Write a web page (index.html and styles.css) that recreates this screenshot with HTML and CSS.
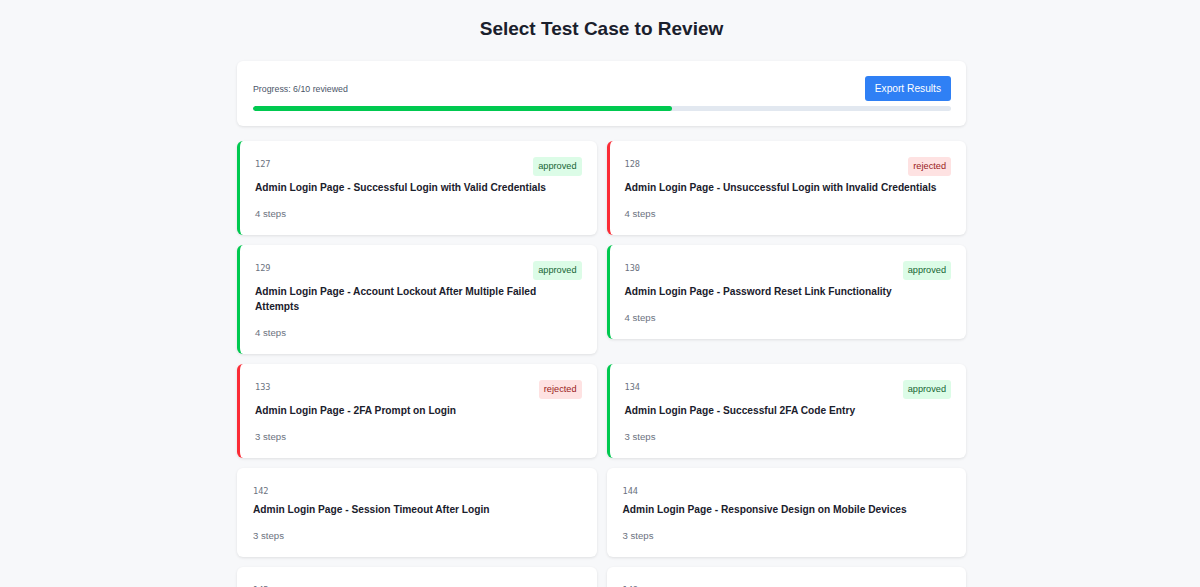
FILE: index.html
```html
<!DOCTYPE html>
<html lang="en">
<head>
    <meta charset="UTF-8">
    <meta name="viewport" content="width=device-width, initial-scale=1.0">
    <title>Select Test Case to Review</title>
    <link rel="stylesheet" href="styles.css">
</head>
<body>
    <div class="container">
        <h1 class="page-title">Select Test Case to Review</h1>

        <div class="progress-card">
            <div class="progress-head">
                <span class="progress-text">Progress: 6/10 reviewed</span>
                <button class="export-btn">Export Results</button>
            </div>
            <div class="progress-track">
                <div class="progress-fill" style="width: 60%"></div>
            </div>
        </div>

        <div class="case-grid">
            <div class="case-card approved">
                <div class="case-head">
                    <span class="case-id">127</span>
                    <span class="badge badge-approved">approved</span>
                </div>
                <div class="case-title">Admin Login Page - Successful Login with Valid Credentials</div>
                <div class="case-steps">4 steps</div>
            </div>
            <div class="case-card rejected">
                <div class="case-head">
                    <span class="case-id">128</span>
                    <span class="badge badge-rejected">rejected</span>
                </div>
                <div class="case-title">Admin Login Page - Unsuccessful Login with Invalid Credentials</div>
                <div class="case-steps">4 steps</div>
            </div>
            <div class="case-card approved">
                <div class="case-head">
                    <span class="case-id">129</span>
                    <span class="badge badge-approved">approved</span>
                </div>
                <div class="case-title">Admin Login Page - Account Lockout After Multiple Failed Attempts</div>
                <div class="case-steps">4 steps</div>
            </div>
            <div class="case-card approved">
                <div class="case-head">
                    <span class="case-id">130</span>
                    <span class="badge badge-approved">approved</span>
                </div>
                <div class="case-title">Admin Login Page - Password Reset Link Functionality</div>
                <div class="case-steps">4 steps</div>
            </div>
            <div class="case-card rejected">
                <div class="case-head">
                    <span class="case-id">133</span>
                    <span class="badge badge-rejected">rejected</span>
                </div>
                <div class="case-title">Admin Login Page - 2FA Prompt on Login</div>
                <div class="case-steps">3 steps</div>
            </div>
            <div class="case-card approved">
                <div class="case-head">
                    <span class="case-id">134</span>
                    <span class="badge badge-approved">approved</span>
                </div>
                <div class="case-title">Admin Login Page - Successful 2FA Code Entry</div>
                <div class="case-steps">3 steps</div>
            </div>
            <div class="case-card">
                <div class="case-head">
                    <span class="case-id">142</span>
                </div>
                <div class="case-title">Admin Login Page - Session Timeout After Login</div>
                <div class="case-steps">3 steps</div>
            </div>
            <div class="case-card">
                <div class="case-head">
                    <span class="case-id">144</span>
                </div>
                <div class="case-title">Admin Login Page - Responsive Design on Mobile Devices</div>
                <div class="case-steps">3 steps</div>
            </div>
            <div class="case-card">
                <div class="case-head">
                    <span class="case-id">145</span>
                </div>
                <div class="case-title">Admin Login Page - Remember Me Option</div>
                <div class="case-steps">3 steps</div>
            </div>
            <div class="case-card">
                <div class="case-head">
                    <span class="case-id">148</span>
                </div>
                <div class="case-title">Admin Login Page - Logout Functionality</div>
                <div class="case-steps">3 steps</div>
            </div>
        </div>
    </div>
</body>
</html>
```

FILE: styles.css
```css
body {
    margin: 0;
    padding: 0 0 0 3px;
    background-color: #f7f8fa;
    font-family: "Liberation Sans", Arial, sans-serif;
    color: #1a202c;
}

/* 页面容器 */
.container {
    width: 729px;
    margin: 0 auto;
    padding: 16px 0 20px;
}

.page-title {
    margin: 0 0 19px;
    text-align: center;
    font-size: 19px;
    line-height: 26px;
    font-weight: bold;
    color: #1a202c;
}

/* 进度卡片 */
.progress-card {
    background-color: #fff;
    border-radius: 6px;
    box-shadow: 0 1px 3px rgba(0, 0, 0, 0.1);
    padding: 15px 15px 15px 16px;
    margin-bottom: 15px;
}

.progress-head {
    display: flex;
    justify-content: space-between;
    align-items: center;
    margin-bottom: 5px;
}

.progress-text {
    font-size: 8.8px;
    color: #4a5568;
}

.export-btn {
    background-color: #2f80f5;
    color: #fff;
    border: none;
    border-radius: 3px;
    font-family: inherit;
    font-size: 10.2px;
    height: 25px;
    padding: 0 10px;
    cursor: pointer;
}

.progress-track {
    height: 5px;
    background-color: #e2e8f0;
    border-radius: 3px;
    overflow: hidden;
}

.progress-fill {
    height: 100%;
    background-color: #00c950;
    border-radius: 3px;
}

/* 用例网格 */
.case-grid {
    display: grid;
    grid-template-columns: 1fr 1fr;
    gap: 10px;
    align-items: start;
}

.case-card {
    background-color: #fff;
    border-radius: 6px;
    box-shadow: 0 1px 3px rgba(0, 0, 0, 0.1);
    padding: 16px 15px 15px 16px;
}

.case-card.approved {
    border-left: 3px solid #00c950;
    padding-left: 15px;
}

.case-card.rejected {
    border-left: 3px solid #fb2c36;
    padding-left: 15px;
}

.case-head {
    display: flex;
    justify-content: space-between;
    align-items: flex-start;
    margin-bottom: 4px;
}

.case-id {
    font-family: "DejaVu Sans Mono", monospace;
    font-size: 8.6px;
    line-height: 13px;
    color: #6b7280;
    padding-top: 1px;
}

.badge {
    font-size: 9.2px;
    line-height: 13px;
    padding: 3px 5px;
    border-radius: 3px;
}

.badge-approved {
    background-color: #dcfce7;
    color: #166534;
}

.badge-rejected {
    background-color: #fee2e2;
    color: #991b1b;
}

.case-title {
    font-size: 10.2px;
    line-height: 15px;
    font-weight: bold;
    color: #1a202c;
    margin-bottom: 12px;
}

.case-steps {
    font-size: 9.6px;
    line-height: 13px;
    color: #6b7280;
}
```
